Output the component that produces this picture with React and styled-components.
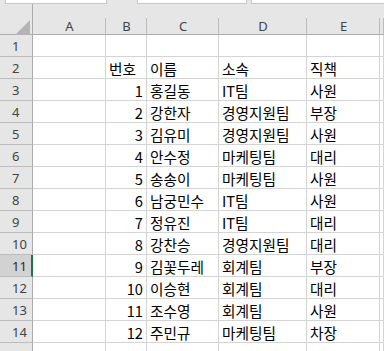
import React from "react";
import styled, { createGlobalStyle } from "styled-components";

const Global = createGlobalStyle`
  html, body { margin: 0; padding: 0; background: #ffffff; }
  body { font-family: "Noto Sans CJK KR", "Noto Sans", sans-serif; overflow: hidden; }
`;

const COLS = [73, 41, 72, 88, 73, 4];
const LETTERS = ["A", "B", "C", "D", "E", ""];

const Sheet = styled.div`
  width: 384px;
  height: 351px;
  overflow: hidden;
  background: #e6e6e6;
`;

const FormulaStrip = styled.div`
  height: 4px;
  display: grid;
  grid-template-columns: 5px 102px 30px 110px 4px 1fr;
`;

const FormulaBox = styled.div`
  background: #ffffff;
  border-left: 1px solid #c6c6c6;
  border-right: ${(p) => (p.$open ? "none" : "1px solid #c6c6c6")};
  border-bottom: 1px solid #c6c6c6;
  box-sizing: border-box;
`;

const Gap = styled.div``;

const Grid = styled.div`
  display: grid;
  grid-template-columns: 33px ${COLS.map((c) => c + "px").join(" ")};
  grid-auto-rows: 22px;
  grid-template-rows: 31px;
`;

const Corner = styled.div`
  background: #e6e6e6;
  border-right: 1px solid #ababab;
  border-bottom: 1px solid #ababab;
  box-sizing: border-box;
  position: relative;
  svg { position: absolute; left: 15px; top: 16px; }
`;

const ColHeader = styled.div`
  background: #e6e6e6;
  border-bottom: 1px solid #ababab;
  box-sizing: border-box;
  position: relative;
  display: flex;
  align-items: center;
  justify-content: center;
  padding-top: 14px;
  font-family: "Noto Sans", sans-serif;
  font-size: 13px;
  color: #444444;
  &::after {
    content: "";
    position: absolute;
    right: 0;
    top: 14px;
    bottom: 0;
    width: 1px;
    background: #bcbcbc;
  }
`;

const RowHeader = styled.div`
  background: ${(p) => (p.$selected ? "#d2d2d2" : "#e6e6e6")};
  border-right: ${(p) => (p.$selected ? "2px solid #217346" : "1px solid #ababab")};
  border-bottom: 1px solid #bcbcbc;
  box-sizing: border-box;
  display: flex;
  align-items: center;
  padding-left: 12px;
  padding-top: 1px;
  font-family: "Noto Sans", sans-serif;
  font-size: 13px;
  color: ${(p) => (p.$selected ? "#2b2b2b" : "#444444")};
`;

const Cell = styled.div`
  background: #ffffff;
  border-right: 1px solid #d4d4d4;
  border-bottom: 1px solid #d4d4d4;
  box-sizing: border-box;
  display: flex;
  align-items: flex-end;
  justify-content: ${(p) => (p.$num ? "flex-end" : "flex-start")};
  padding: 0 ${(p) => (p.$num ? "3px" : "0")} 0 ${(p) => (p.$num ? "0" : "3px")};
  font-size: 14.67px;
  line-height: 19px;
  color: #000000;
  white-space: nowrap;
  overflow: visible;
`;

const DATA = [
  ["번호", "이름", "소속", "직책"],
  [1, "홍길동", "IT팀", "사원"],
  [2, "강한자", "경영지원팀", "부장"],
  [3, "김유미", "경영지원팀", "사원"],
  [4, "안수정", "마케팅팀", "대리"],
  [5, "송송이", "마케팅팀", "사원"],
  [6, "남궁민수", "IT팀", "사원"],
  [7, "정유진", "IT팀", "대리"],
  [8, "강찬승", "경영지원팀", "대리"],
  [9, "김꽃두레", "회계팀", "부장"],
  [10, "이승현", "회계팀", "대리"],
  [11, "조수영", "회계팀", "사원"],
  [12, "주민규", "마케팅팀", "차장"],
];

export default function App() {
  const rows = [];
  for (let r = 1; r <= 15; r++) {
    const data = r >= 2 && r <= 14 ? DATA[r - 2] : null;
    rows.push(
      <React.Fragment key={r}>
        <RowHeader $selected={r === 11}>{r <= 14 ? r : ""}</RowHeader>
        {COLS.map((_, ci) => {
          let content = "";
          let num = false;
          if (data && ci >= 1 && ci <= 4) {
            content = data[ci - 1];
            num = typeof content === "number";
          }
          return (
            <Cell key={ci} $num={num}>
              {content}
            </Cell>
          );
        })}
      </React.Fragment>
    );
  }
  return (
    <>
      <Global />
      <Sheet>
        <FormulaStrip>
          <Gap />
          <FormulaBox />
          <Gap />
          <FormulaBox />
          <Gap />
          <FormulaBox $open />
        </FormulaStrip>
        <Grid>
          <Corner>
            <svg width="15" height="15" viewBox="0 0 15 15">
              <polygon points="0,15 15,0 15,15" fill="#b4b4b4" />
            </svg>
          </Corner>
          {LETTERS.map((l, i) => (
            <ColHeader key={i}>{l}</ColHeader>
          ))}
          {rows}
        </Grid>
      </Sheet>
    </>
  );
}
